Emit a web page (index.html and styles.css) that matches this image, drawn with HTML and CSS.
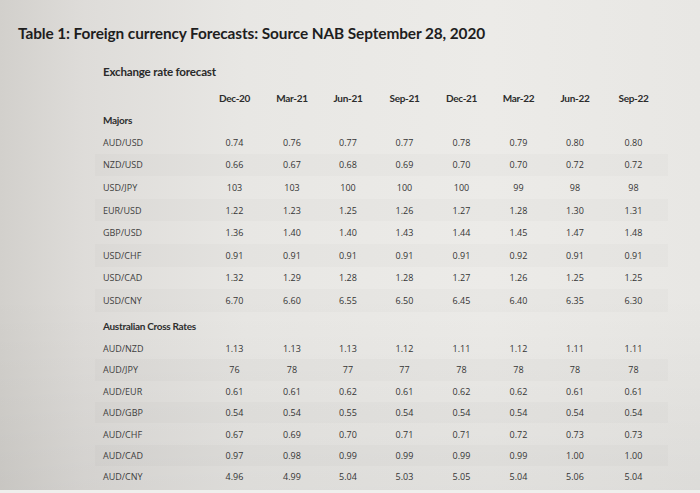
FILE: index.html
```html
<!DOCTYPE html>
<html>
<head>
<meta charset="utf-8">
<link rel="stylesheet" href="styles.css">
</head>
<body>
<div class="page">
  <h1 class="title">Table 1: Foreign currency Forecasts: Source NAB September 28, 2020</h1>
  <div class="sheet">
    <div class="caption">Exchange rate forecast</div>
    <div class="row head"><span></span><span>Dec-20</span><span>Mar-21</span><span>Jun-21</span><span>Sep-21</span><span>Dec-21</span><span>Mar-22</span><span>Jun-22</span><span>Sep-22</span></div>
    <div class="section">Majors</div>
    <div class="group majors">
      <div class="row"><span>AUD/USD</span><span>0.74</span><span>0.76</span><span>0.77</span><span>0.77</span><span>0.78</span><span>0.79</span><span>0.80</span><span>0.80</span></div>
      <div class="row"><span>NZD/USD</span><span>0.66</span><span>0.67</span><span>0.68</span><span>0.69</span><span>0.70</span><span>0.70</span><span>0.72</span><span>0.72</span></div>
      <div class="row"><span>USD/JPY</span><span>103</span><span>103</span><span>100</span><span>100</span><span>100</span><span>99</span><span>98</span><span>98</span></div>
      <div class="row"><span>EUR/USD</span><span>1.22</span><span>1.23</span><span>1.25</span><span>1.26</span><span>1.27</span><span>1.28</span><span>1.30</span><span>1.31</span></div>
      <div class="row"><span>GBP/USD</span><span>1.36</span><span>1.40</span><span>1.40</span><span>1.43</span><span>1.44</span><span>1.45</span><span>1.47</span><span>1.48</span></div>
      <div class="row"><span>USD/CHF</span><span>0.91</span><span>0.91</span><span>0.91</span><span>0.91</span><span>0.91</span><span>0.92</span><span>0.91</span><span>0.91</span></div>
      <div class="row"><span>USD/CAD</span><span>1.32</span><span>1.29</span><span>1.28</span><span>1.28</span><span>1.27</span><span>1.26</span><span>1.25</span><span>1.25</span></div>
      <div class="row"><span>USD/CNY</span><span>6.70</span><span>6.60</span><span>6.55</span><span>6.50</span><span>6.45</span><span>6.40</span><span>6.35</span><span>6.30</span></div>
    </div>
    <div class="section cross">Australian Cross Rates</div>
    <div class="group crosses">
      <div class="row"><span>AUD/NZD</span><span>1.13</span><span>1.13</span><span>1.13</span><span>1.12</span><span>1.11</span><span>1.12</span><span>1.11</span><span>1.11</span></div>
      <div class="row"><span>AUD/JPY</span><span>76</span><span>78</span><span>77</span><span>77</span><span>78</span><span>78</span><span>78</span><span>78</span></div>
      <div class="row"><span>AUD/EUR</span><span>0.61</span><span>0.61</span><span>0.62</span><span>0.61</span><span>0.62</span><span>0.62</span><span>0.61</span><span>0.61</span></div>
      <div class="row"><span>AUD/GBP</span><span>0.54</span><span>0.54</span><span>0.55</span><span>0.54</span><span>0.54</span><span>0.54</span><span>0.54</span><span>0.54</span></div>
      <div class="row"><span>AUD/CHF</span><span>0.67</span><span>0.69</span><span>0.70</span><span>0.71</span><span>0.71</span><span>0.72</span><span>0.73</span><span>0.73</span></div>
      <div class="row"><span>AUD/CAD</span><span>0.97</span><span>0.98</span><span>0.99</span><span>0.99</span><span>0.99</span><span>0.99</span><span>1.00</span><span>1.00</span></div>
      <div class="row"><span>AUD/CNY</span><span>4.96</span><span>4.99</span><span>5.04</span><span>5.03</span><span>5.05</span><span>5.04</span><span>5.06</span><span>5.04</span></div>
    </div>
  </div>
</div>
</body>
</html>
```
FILE: styles.css
```css
html, body {
  margin: 0;
  padding: 0;
}
body {
  width: 700px;
  height: 493px;
  overflow: hidden;
  background:
    linear-gradient(to top, #efefed 0, #efefed 3px, transparent 3px),
    linear-gradient(to bottom, rgba(0,0,0,0) 60%, rgba(0,0,0,0.05) 100%),
    linear-gradient(to right, #d2d0cc 0%, #dedcd9 12%, #e8e7e4 35%, #ecebe8 70%, #e8e7e4 100%);
  font-family: "Open Sans", "Liberation Sans", sans-serif;
  color: #353535;
}
.page {
  padding: 23px 0 0 18px;
}
.title {
  margin: 0;
  font-family: Lato, "Liberation Sans", sans-serif;
  font-weight: 700;
  font-size: 15.4px;
  line-height: 20px;
  color: #1e1e1e;
  letter-spacing: -0.1px;
}
.sheet {
  margin-left: 85px;
  padding-top: 22px;
  width: 565px;
}
.caption {
  font-family: Lato, "Liberation Sans", sans-serif;
  font-weight: 700;
  font-size: 11.6px;
  line-height: 14px;
  color: #2a2a2a;
  letter-spacing: -0.2px;
}
.row {
  display: grid;
  grid-template-columns: 102px 59px 56px 56px 57px 57px 57px 56px 61px;
  align-items: center;
  font-size: 9px;
}
.row span {
  text-align: center;
}
.row span:first-child {
  text-align: left;
  color: #404040;
}
.head {
  margin-top: 12px;
  height: 14px;
  font-family: Lato, "Liberation Sans", sans-serif;
  font-weight: 700;
  font-size: 10px;
  color: #2c2c2c;
  letter-spacing: -0.3px;
}
.section {
  margin-top: 4px;
  height: 22px;
  line-height: 22px;
  font-family: Lato, "Liberation Sans", sans-serif;
  font-weight: 700;
  font-size: 10px;
  color: #2e2e2e;
  letter-spacing: -0.3px;
}
.section.cross {
  height: 22px;
  line-height: 21px;
}
.majors .row {
  height: 22.6px;
}
.crosses .row {
  height: 21.4px;
}
.group .row:nth-child(even) {
  background: rgba(0, 0, 0, 0.014);
  margin-left: -8px;
  padding-left: 8px;
}
```
